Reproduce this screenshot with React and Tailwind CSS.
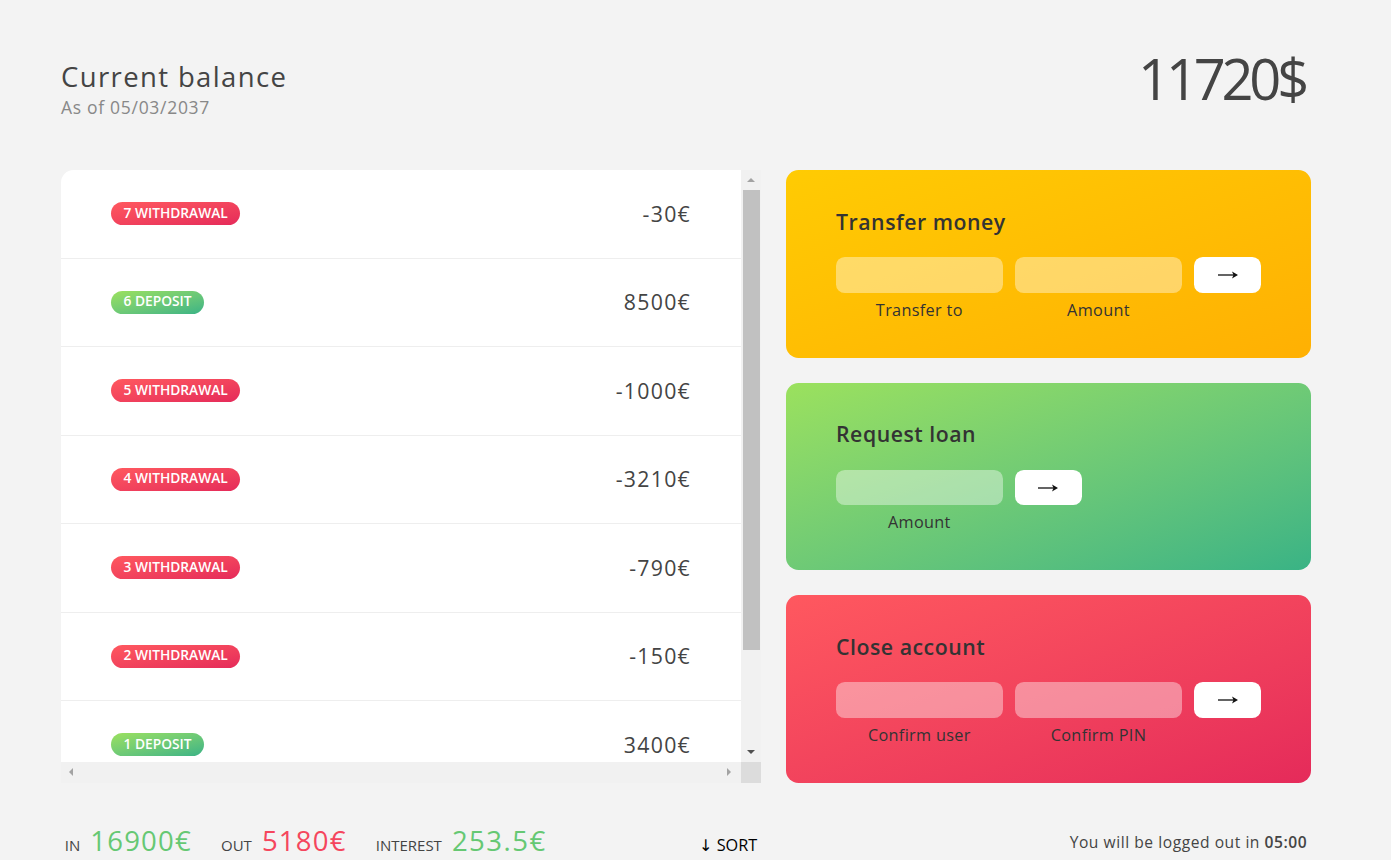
import React from 'react';

const MOVEMENTS = [
  { n: 7, type: 'withdrawal', value: '-30€' },
  { n: 6, type: 'deposit', value: '8500€' },
  { n: 5, type: 'withdrawal', value: '-1000€' },
  { n: 4, type: 'withdrawal', value: '-3210€' },
  { n: 3, type: 'withdrawal', value: '-790€' },
  { n: 2, type: 'withdrawal', value: '-150€' },
  { n: 1, type: 'deposit', value: '3400€' },
];

const font = { fontFamily: '"Open Sans", "DejaVu Sans", sans-serif' };

function Tri({ dir, color }) {
  const pts = {
    up: '0,4 4,0 8,4',
    down: '0,0 8,0 4,4',
    left: '4,0 4,8 0,4',
    right: '0,0 0,8 4,4',
  }[dir];
  const vertical = dir === 'up' || dir === 'down';
  return (
    <svg width={vertical ? 8 : 4} height={vertical ? 4 : 8} viewBox={vertical ? '0 0 8 4' : '0 0 4 8'}>
      <polygon points={pts} fill={color} />
    </svg>
  );
}

function Arrow() {
  return (
    <svg width="22" height="10" viewBox="0 0 22 10" className="mx-auto">
      <line x1="1" y1="5" x2="19" y2="5" stroke="#222" strokeWidth="1.4" />
      <polygon points="15,1.5 21,5 15,8.5 16.5,5" fill="#111" />
    </svg>
  );
}

function Movements() {
  return (
    <div className="row-span-3 bg-white rounded-tl-[12.5px] overflow-hidden flex flex-col">
      <div className="flex flex-1 min-h-0">
        {/* rows */}
        <div className="flex-1 overflow-hidden">
          {MOVEMENTS.map((m) => (
            <div key={m.n} className="h-[88.5px] px-[50px] flex items-center border-b border-[#eee] shrink-0">
              <div
                className={
                  'text-[13.75px] leading-[20.5px] font-semibold uppercase text-white px-[12.5px] pt-[0.5px] pb-[2px] rounded-full bg-linear-to-tl ' +
                  (m.type === 'deposit' ? 'from-[#39b385] to-[#9be15d]' : 'from-[#e52a5a] to-[#ff585f]')
                }
              >
                {m.n} {m.type}
              </div>
              <div className="ml-auto text-[21.25px] leading-[32px] text-[#444] tracking-[0.06em]">{m.value}</div>
            </div>
          ))}
        </div>
        {/* vertical scrollbar */}
        <div className="w-[20px] bg-[#f1f1f1] flex flex-col items-center">
          <div className="h-[20px] flex items-center justify-center">
            <Tri dir="up" color="#a3a3a3" />
          </div>
          <div className="w-[17px] h-[460px] bg-[#c1c1c1]" />
          <div className="flex-1" />
          <div className="h-[20px] flex items-center justify-center">
            <Tri dir="down" color="#505050" />
          </div>
        </div>
      </div>
      {/* horizontal scrollbar */}
      <div className="h-[21px] flex">
        <div className="flex-1 bg-[#f1f1f1] flex items-center justify-between pl-[8px] pr-[10px]">
          <Tri dir="left" color="#a3a3a3" />
          <Tri dir="right" color="#a3a3a3" />
        </div>
        <div className="w-[20px] bg-[#dcdcdc]" />
      </div>
    </div>
  );
}

function Operation({ title, gradient, loan, labels }) {
  const label = 'text-[16.25px] leading-[24px] text-center text-[#333] tracking-[0.02em]';
  const input = 'h-[35.5px] rounded-[8.75px] bg-white/40';
  const btn = 'h-[35.5px] rounded-[8.75px] bg-white flex items-center';
  return (
    <div className={'rounded-[12.5px] px-[50px] pt-[36.5px] text-[#333] bg-linear-to-tl ' + gradient}>
      <h2 className="text-[21.25px] leading-[30px] font-semibold text-[#333] mb-[20.75px] tracking-[0.025em]">{title}</h2>
      {loan ? (
        <div className="grid grid-cols-[2.5fr_1fr_2.5fr] gap-x-[12.5px] gap-y-[5px]">
          <div className={input} />
          <button className={btn}><Arrow /></button>
          <div />
          <div className={label}>{labels[0]}</div>
        </div>
      ) : (
        <div className="grid grid-cols-[2.5fr_2.5fr_1fr] gap-x-[12.5px] gap-y-[5px]">
          <div className={input} />
          <div className={input} />
          <button className={btn}><Arrow /></button>
          <div className={label}>{labels[0]}</div>
          <div className={label}>{labels[1]}</div>
        </div>
      )}
    </div>
  );
}

export default function App() {
  return (
    <div className="min-h-screen w-full bg-[#f3f3f3] text-[#444] overflow-hidden" style={font}>
      <div className="w-[1250px] ml-[61px] pt-[36px]">
        {/* balance */}
        <div className="flex items-end justify-between h-[84px] mb-[50px]">
          <div>
            <p className="text-[27.5px] leading-[41px] font-medium -mb-[2.5px] tracking-[0.05em]">Current balance</p>
            <p className="text-[17.5px] leading-[26px] text-[#888] tracking-[0.04em]">As of 05/03/2037</p>
          </div>
          <p className="text-[56px] leading-[84px] mr-[6px] tracking-[-0.075em] pt-[4px]">11720$</p>
        </div>

        <div className="grid grid-cols-[700px_525px] grid-rows-[187.5px_187.5px_187.5px_auto] gap-[25px]">
          <Movements />
          <Operation
            title="Transfer money"
            gradient="from-[#ffb003] to-[#ffcb03]"
            labels={['Transfer to', 'Amount']}
          />
          <Operation
            title="Request loan"
            gradient="from-[#39b385] to-[#9be15d]"
            loan
            labels={['Amount']}
          />
          <Operation
            title="Close account"
            gradient="from-[#e52a5a] to-[#ff585f]"
            labels={['Confirm user', 'Confirm PIN']}
          />

          {/* summary */}
          <div className="flex items-baseline px-[3.75px] mt-[12.5px]">
            <p className="text-[15px] font-medium uppercase mr-[10px]">In</p>
            <p className="text-[27.5px] leading-[41px] text-[#66c873] mr-[29px] tracking-[0.045em]">16900€</p>
            <p className="text-[15px] font-medium uppercase mr-[10px]">Out</p>
            <p className="text-[27.5px] leading-[41px] text-[#f5465d] mr-[29px] tracking-[0.045em]">5180€</p>
            <p className="text-[15px] font-medium uppercase mr-[10px]">Interest</p>
            <p className="text-[27.5px] leading-[41px] text-[#66c873] mr-[29px] tracking-[0.055em]">253.5€</p>
            <button className="ml-auto text-[16.25px] font-medium text-black">↓ SORT</button>
          </div>

          <p className="px-[3.75px] mt-[23.75px] text-right text-[15.6px] leading-[23px] tracking-[0.035em]">
            You will be logged out in <span className="font-semibold">05:00</span>
          </p>
        </div>
      </div>
    </div>
  );
}
